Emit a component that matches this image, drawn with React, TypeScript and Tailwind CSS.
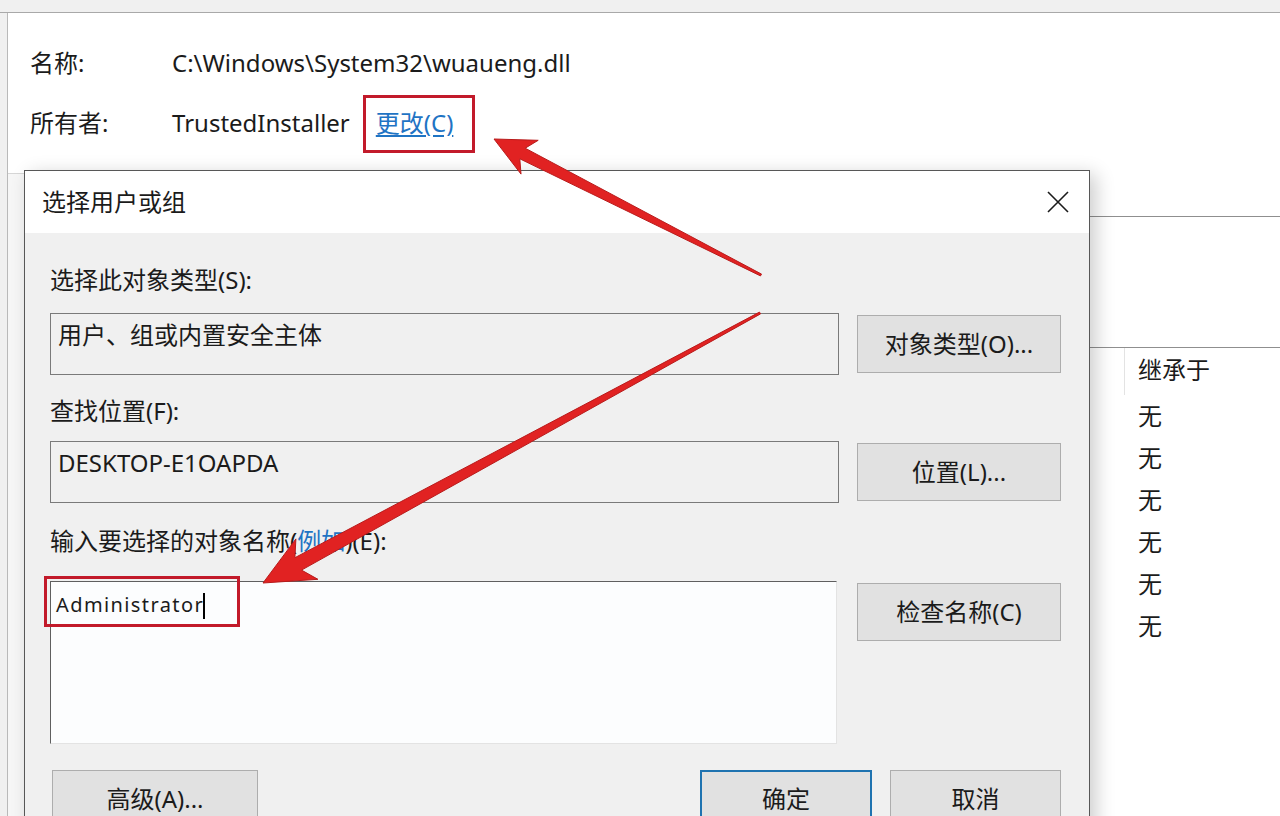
import React from "react";

function Btn({
  children,
  className = "",
  primary = false,
}: {
  children: React.ReactNode;
  className?: string;
  primary?: boolean;
}) {
  return (
    <div
      className={`flex items-center justify-center h-[58px] bg-[#e1e1e1] text-[24px] leading-[30px] text-[#1b1b1b] ${
        primary ? "border-2 border-[#1f73b0]" : "border border-[#adadad]"
      } ${className}`}
    >
      {children}
    </div>
  );
}

export default function App() {
  const rows = ["无", "无", "无", "无", "无", "无"];
  return (
    <div className="relative w-[1280px] h-[816px] overflow-hidden bg-white text-[#1b1b1b] font-['Noto_Sans','Noto_Sans_CJK_SC',sans-serif]">
      {/* background window */}
      <div className="flex flex-col h-full">
        <div className="h-[13px] shrink-0 bg-[#f0f0f0] border-b border-[#a9a9a9]" />
        <div className="flex flex-1">
          <div className="w-[8px] shrink-0 bg-[#f0f0f0] border-r border-[#b9b9b9]" />
          <div className="flex-1 flex flex-col">
            <div className="pl-[22px] pt-[33px] flex flex-col gap-[26px]">
              <div className="flex items-center h-[34px] text-[24px] leading-[34px]">
                <span className="w-[142px]">名称:</span>
                <span>{"C:\\Windows\\System32\\wuaueng.dll"}</span>
              </div>
              <div className="flex items-center h-[34px] text-[24px] leading-[34px]">
                <span className="w-[142px]">所有者:</span>
                <span>TrustedInstaller</span>
                <span className="ml-[26px] text-[#1f74c4] underline underline-offset-[3px]">更改(C)</span>
              </div>
            </div>
            <div className="flex mt-[33px] flex-1">
              <div className="w-[480px] bg-[#f6f6f6] border-t border-[#d6d6d6]" />
              <div className="flex-1 flex flex-col">
                <div className="mt-[43px] h-[131px] border-t border-[#8f8f8f]" />
                <div className="border-t border-[#8f8f8f] flex flex-1">
                  <div className="flex-1" />
                  <div className="w-[156px] flex flex-col text-[24px]">
                    <div className="h-[47px] border-l border-[#e3e3e3] pl-[13px] pt-[7px] leading-[30px]">继承于</div>
                    {rows.map((r, i) => (
                      <div key={i} className="h-[42px] leading-[42px] pl-[14px]">
                        {r}
                      </div>
                    ))}
                  </div>
                </div>
              </div>
            </div>
          </div>
        </div>
      </div>

      {/* dialog window */}
      <div className="absolute left-[24px] top-[170px] w-[1066px] h-[700px] border border-[#575757] bg-[#f0f0f0] shadow-[6px_4px_18px_rgba(0,0,0,0.2)] flex flex-col">
        <div className="h-[62px] bg-white flex items-center justify-between pl-[17px] pr-[20px]">
          <span className="text-[24px] leading-[30px]">选择用户或组</span>
          <svg width="22" height="22" viewBox="0 0 22 22">
            <path d="M1 1 L21 21 M21 1 L1 21" stroke="#1b1b1b" strokeWidth="1.6" fill="none" />
          </svg>
        </div>
        <div className="pl-[25px] pr-[28px] pt-[32px] flex flex-col text-[24px]">
          <div className="h-[30px] leading-[30px]">选择此对象类型(S):</div>
          <div className="mt-[18px] flex items-center gap-[18px]">
            <div className="w-[789px] h-[62px] border border-[#7a7a7a] bg-[#f0f0f0] pl-[7px] pt-[6px] leading-[30px]">
              用户、组或内置安全主体
            </div>
            <Btn className="w-[204px]">对象类型(O)...</Btn>
          </div>
          <div className="mt-[21px] h-[30px] leading-[30px]">查找位置(F):</div>
          <div className="mt-[15px] flex items-center gap-[18px]">
            <div className="w-[789px] h-[62px] border border-[#7a7a7a] bg-[#f0f0f0] pl-[7px] pt-[6px] leading-[30px]">
              DESKTOP-E1OAPDA
            </div>
            <Btn className="w-[204px]">位置(L)...</Btn>
          </div>
          <div className="mt-[23px] h-[30px] leading-[30px]">
            输入要选择的对象名称(<span className="text-[#1f74c4]">例如</span>)(E):
          </div>
          <div className="mt-[25px] flex items-start gap-[20px]">
            <div className="w-[787px] h-[163px] border-t border-l border-t-[#5f5f5f] border-l-[#5f5f5f] border-r border-b border-r-[#e3e3e3] border-b-[#e3e3e3] bg-[#fcfdfe] pl-[5px] pt-[3px]">
              <span className="text-[20px] leading-[30px] tracking-[1.4px]">Administrator</span>
              <span className="inline-block align-middle w-[2px] h-[26px] bg-black -ml-[1px]" />
            </div>
            <Btn className="w-[204px] mt-[2px]">检查名称(C)</Btn>
          </div>
          <div className="mt-[26px] flex items-start">
            <Btn className="w-[206px] ml-[2px]">高级(A)...</Btn>
            <div className="ml-auto flex gap-[18px]">
              <Btn primary className="w-[172px]">确定</Btn>
              <Btn className="w-[171px]">取消</Btn>
            </div>
          </div>
        </div>
      </div>

      {/* annotations */}
      <div className="absolute left-[363px] top-[95px] w-[112px] h-[58px] border-[3px] border-[#c21a2a]" />
      <div className="absolute left-[44px] top-[576px] w-[196px] h-[51px] border-[3px] border-[#c21a2a]" />
      <svg className="absolute left-0 top-0 pointer-events-none" width="1280" height="816" viewBox="0 0 1280 816">
        <polygon
          points="494,139 521,174.1 519.8,158.8 760.5,275.9 761.5,274.1 525.2,148.2 538.2,140.3"
          fill="#e12222"
          stroke="#b81b1b"
          strokeWidth="1"
          strokeLinejoin="round"
        />
        <polygon
          points="263,583 317.9,579.3 301.5,570.1 760.5,313.9 759.5,312.1 294.9,557.7 295.9,538.9"
          fill="#e12222"
          stroke="#b81b1b"
          strokeWidth="1"
          strokeLinejoin="round"
        />
      </svg>
    </div>
  );
}
